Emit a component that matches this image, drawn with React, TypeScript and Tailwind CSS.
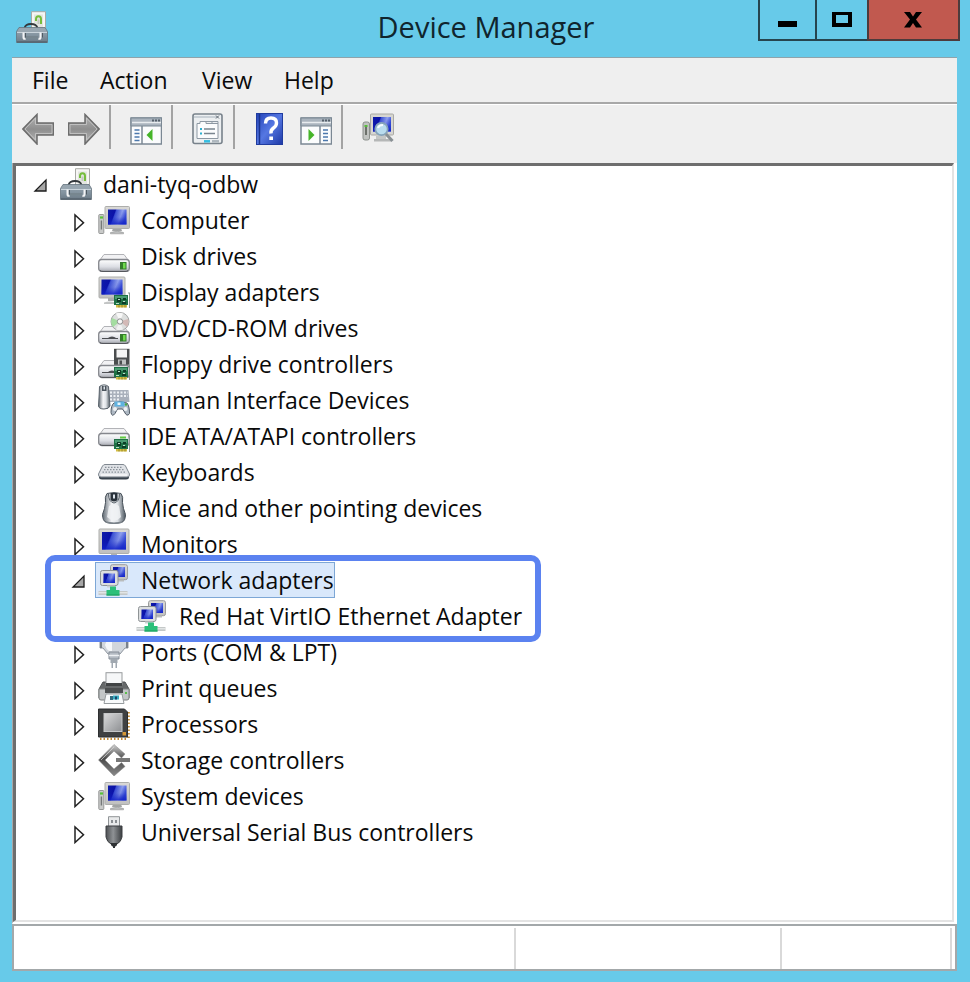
import { useState, type ReactNode } from "react";

function Svg({ children, size = "h-8 w-8" }: { children: ReactNode; size?: string }) {
  return (
    <svg viewBox="0 0 32 32" className={`${size} block shrink-0`} aria-hidden="true">
      {children}
    </svg>
  );
}

function SharedGradients() {
  return (
    <svg className="absolute h-0 w-0" aria-hidden="true">
      <defs>
        <linearGradient id="screen" x1="0" y1="0" x2="1" y2="0.3">
          <stop offset="0" stopColor="#0f1ca8" />
          <stop offset="0.38" stopColor="#0a10a6" />
          <stop offset="0.44" stopColor="#3f55d4" />
          <stop offset="0.75" stopColor="#93a4ee" />
          <stop offset="1" stopColor="#3a50d8" />
        </linearGradient>
        <linearGradient id="shade" x1="0" y1="0" x2="0" y2="1">
          <stop offset="0" stopColor="#1020c0" stopOpacity="0" />
          <stop offset="0.5" stopColor="#1020c0" stopOpacity="0.2" />
          <stop offset="1" stopColor="#1020c8" stopOpacity="0.9" />
        </linearGradient>
        <linearGradient id="frame" x1="0" y1="0" x2="0" y2="1">
          <stop offset="0" stopColor="#dad9d6" />
          <stop offset="1" stopColor="#c0c0bf" />
        </linearGradient>
        <linearGradient id="drive" x1="0" y1="0" x2="0" y2="1">
          <stop offset="0" stopColor="#ffffff" />
          <stop offset="0.6" stopColor="#dcdee4" />
          <stop offset="1" stopColor="#a9abb2" />
        </linearGradient>
        <linearGradient id="case" x1="0" y1="0" x2="0" y2="1">
          <stop offset="0" stopColor="#94a3ae" />
          <stop offset="0.5" stopColor="#8595a1" />
          <stop offset="1" stopColor="#6b7a86" />
        </linearGradient>
        <linearGradient id="arrow" x1="0" y1="0" x2="0" y2="1">
          <stop offset="0" stopColor="#b5b5b5" />
          <stop offset="0.5" stopColor="#8e8e8e" />
          <stop offset="1" stopColor="#b8b8b8" />
        </linearGradient>
        <linearGradient id="mouse" x1="0" y1="0" x2="1" y2="0">
          <stop offset="0" stopColor="#5f6972" />
          <stop offset="0.4" stopColor="#f4f5f7" />
          <stop offset="0.65" stopColor="#dfe3e7" />
          <stop offset="1" stopColor="#4c565f" />
        </linearGradient>
        <linearGradient id="chip" x1="0" y1="0" x2="1" y2="1">
          <stop offset="0" stopColor="#d9dadb" />
          <stop offset="1" stopColor="#8d8f92" />
        </linearGradient>
        <linearGradient id="book" x1="0" y1="0" x2="1" y2="1">
          <stop offset="0" stopColor="#2544b8" />
          <stop offset="0.5" stopColor="#5577e2" />
          <stop offset="1" stopColor="#1d38a6" />
        </linearGradient>
        <linearGradient id="metal" x1="0" y1="0" x2="0" y2="1">
          <stop offset="0" stopColor="#d0d0d0" />
          <stop offset="0.45" stopColor="#4a4a4a" />
          <stop offset="1" stopColor="#8a8a8a" />
        </linearGradient>
        <linearGradient id="plug" x1="0" y1="0" x2="1" y2="0">
          <stop offset="0" stopColor="#4d5053" />
          <stop offset="0.45" stopColor="#8f9295" />
          <stop offset="1" stopColor="#3c3f42" />
        </linearGradient>
      </defs>
    </svg>
  );
}

function Screen({ x, y, width, height }: { x: number; y: number; width: number; height: number }) {
  return (
    <>
      <rect x={x} y={y} width={width} height={height} fill="url(#screen)" />
      <rect x={x} y={y} width={width} height={height} fill="url(#shade)" />
    </>
  );
}

function AdapterCard() {
  return (
    <g>
      <path d="M16 19h14v10H16z" fill="#1e7145" />
      <path d="M17 20h12v3H17z" fill="#4b9b72" />
      <path d="M19 22h4v4h-4zM25 22h3v2h-3zM24 26h4v2h-4z" fill="#0d3d26" />
      <path d="M20 23h2v1h-2zM25 25h2v1h-2zM18 27h3v1h-3z" fill="#b9dfc8" />
      <path d="M18 29h11v2.5H18z" fill="#d3bd45" />
      <path d="M21 29v2.5M24 29v2.5M27 29v2.5" stroke="#8c7b20" strokeWidth="0.8" />
      <path d="M30 17h1.6v15" fill="none" stroke="#8d9a93" strokeWidth="1.2" />
    </g>
  );
}

function DriveBody({ y = 0, slot = false, led = true }: { y?: number; slot?: boolean; led?: boolean }) {
  return (
    <g transform={`translate(0 ${y})`}>
      <path d="M6 14.5h20l4.5 6h-29z" fill="#f2f2f4" stroke="#b2b3b7" />
      <rect x="0.7" y="19.5" width="30.6" height="12" rx="3" fill="url(#drive)" stroke="#85878d" strokeWidth="1.3" />
      <path d="M2 30.5q1 1 3 1h22q2 0 3-1" fill="none" stroke="#55575c" strokeWidth="1" />
      {slot && <path d="M4 26h6q1.5-1.5 4-1.5t4 1.5h2v1H4z" fill="#4c4e52" />}
      {led && (
        <>
          <rect x="22" y="22" width="6.5" height="7.5" fill="#357d2c" />
          <rect x="25" y="23" width="2.5" height="5.5" fill="#6fdb4d" />
        </>
      )}
    </g>
  );
}

function Toolbox() {
  return (
    <Svg>
      <path d="M15.500 0.700h14V20h-14z" fill="#f6f6f4" stroke="#a9aaa6" />
      <path d="M18 3.500h9V18h-9z" fill="#e3e5e0" />
      <path d="M20 10V8q0-2.800 2.500-2.800T25 8v5" fill="none" stroke="#76bd3d" strokeWidth="2" />
      <path d="M21.500 8.500h2V13h-2z" fill="#c3c7bf" />
      <path d="M8.500 17q1-4 6.500-4t6.500 4" fill="none" stroke="#33383c" strokeWidth="1.800" />
      <path d="M3 16.500h26l2.500 4v11H.5v-11z" fill="url(#case)" stroke="#66737d" strokeWidth="0.800" />
      <path d="M3.300 17h25.400l2.200 4H1.100z" fill="#98a6b0" />
      <path d="M1 21.500h30" stroke="#c9d3da" />
      <path d="M10 25h12v2.500H10z" fill="#77868f" />
      <path d="M1 31h30" stroke="#4a5761" />
      <path d="M7.500 21.500v5q0 2 2 1M24.500 21.500v5q0 2-2 1" fill="none" stroke="#f3f4f5" strokeWidth="2" />
      <path d="M9.500 22v4.500M26.500 22v4.500" stroke="#4f5a62" />
    </Svg>
  );
}

function ComputerIcon() {
  return (
    <Svg>
      <rect x="0.8" y="10.5" width="5" height="19" rx="0.8" fill="#c9cac9" stroke="#969897" />
      <path d="M2 13.500h3" stroke="#58c23a" strokeWidth="2.200" />
      <path d="M3.400 16.500v9" stroke="#757878" strokeWidth="1.400" />
      <path d="M15 24h8l1 3h-10z" fill="#a3a5a5" />
      <path d="M12.500 28.500q7-2.500 13 0v1.300h-13z" fill="#bcbebe" stroke="#929494" strokeWidth="0.6" />
      <rect x="7" y="2.500" width="24.500" height="22" rx="1" fill="url(#frame)" stroke="#adaeac" />
      <Screen x={10} y={5.5} width={18.5} height={15} />
    </Svg>
  );
}

function DiskIcon() {
  return (
    <Svg>
      <DriveBody />
    </Svg>
  );
}

function DisplayIcon() {
  return (
    <Svg>
      <path d="M10 21h8v4h-8z" fill="#aaacac" />
      <path d="M6 26.500q6-2 11 0V28H6z" fill="#c3c5c5" />
      <rect x="1" y="1" width="26" height="21" rx="1" fill="url(#frame)" stroke="#adaeac" />
      <Screen x={3.5} y={3.5} width={21} height={15} />
      <AdapterCard />
    </Svg>
  );
}

function DvdIcon() {
  return (
    <Svg>
      <DriveBody slot />
      <circle cx="22" cy="9.5" r="9" fill="#dcdedd" stroke="#a0a2a2" />
      <path d="M22 9.500 14 6a9 9 0 0 0 1 9z" fill="#a4dda0" />
      <path d="M22 9.500 30 7a9 9 0 0 1-1 8z" fill="#d3b9b6" />
      <path d="M22 9.500 18 1.500a9 9 0 0 1 7 0z" fill="#f8f8f8" />
      <path d="M22 9.500 18 17.500a9 9 0 0 0 7 0z" fill="#f1f1f1" />
      <circle cx="22" cy="9.5" r="2.7" fill="#f7f7f7" stroke="#8d8f8f" />
    </Svg>
  );
}

function FloppyIcon() {
  return (
    <Svg>
      <DriveBody y={-2} slot led={false} />
      <rect x="16" y="0.8" width="15.5" height="16" fill="#4a4d4e" />
      <rect x="18.5" y="1.5" width="10.5" height="8" fill="#f4f4f4" />
      <rect x="20" y="11.5" width="8" height="5" fill="#bfc2c2" />
      <rect x="21.5" y="12.5" width="2.5" height="4" fill="#4a4d4e" />
      <AdapterCard />
    </Svg>
  );
}

function HumanInterfaceIcon() {
  return (
    <Svg>
      <path d="M10 6h20.500l1 12H10z" fill="#a9b0bb" />
      <path d="M12 8.500h18M12 12h18M12 15.500h10" stroke="#edf0f4" strokeWidth="2" strokeDasharray="2 1.500" />
      <path
        d="M1.500 2.500Q6-.8 10.500 2.500L11 10l1 12q-1 3-6 3t-5.500-3L1.200 10z"
        fill="url(#mouse)"
        stroke="#5a636c"
      />
      <path d="M4 2h4.500v5H4z" fill="#4a535c" />
      <path d="M5.500 2.500h1.500v3H5.500z" fill="#dce2e8" />
      <path
        d="M16 19q6-2.500 13 0 2.500 3 2.500 10.500-2.500 4-5-1.500l-2-3h-5L17 29.500q-3 4-4-1Q13 21 16 19z"
        fill="#aeb8c3"
        stroke="#505a65"
      />
      <path d="M16.500 17.500h10v5h-10z" fill="#5fb2e0" />
      <path d="M19.500 18.500h3v2.500h-3z" fill="#e4f6ff" />
      <circle cx="17" cy="25" r="2" fill="#eef1f4" />
      <circle cx="27.5" cy="25" r="2" fill="#eef1f4" />
      <circle cx="28" cy="20.5" r="1.2" fill="#46aa45" />
    </Svg>
  );
}

function IdeIcon() {
  return (
    <Svg>
      <DriveBody y={-6} led={false} />
      <path d="M22 17.500h6" stroke="#63ca42" strokeWidth="2" />
      <AdapterCard />
    </Svg>
  );
}

function KeyboardIcon() {
  return (
    <Svg>
      <path d="M1 18v3q0 2.500 3 2.500h24q3 0 3-2.500v-3z" fill="#38424c" />
      <path
        d="M7 8.500h18q1.500 0 2.500 1.500l4 8q.5 3-2.500 3H3q-3 0-2.500-3l4-8Q5.500 8.500 7 8.500z"
        fill="#dfe2e6"
        stroke="#808890"
      />
      <path d="M7 11.300h18" stroke="#8b929a" strokeWidth="1.3" strokeDasharray="1.500 1.500" />
      <path d="M6 13.700h21" stroke="#8b929a" strokeWidth="1.3" strokeDasharray="1.500 1.500" />
      <path d="M4.500 16.200h24" stroke="#8b929a" strokeWidth="1.3" strokeDasharray="1.500 1.500" />
      <path d="M3 19h26" stroke="#fff" strokeWidth="1.2" />
    </Svg>
  );
}

function MouseIcon() {
  return (
    <Svg>
      <path
        d="M9 1.500Q16-.5 23 1.500q2.500 3 1.500 9 .5 6 3 12 0 6.500-4 8-7.500 2-15 0-4-1.500-4-8 2.500-6 3-12-1-6 1.500-9z"
        fill="url(#mouse)"
        stroke="#48515a"
      />
      <path d="M12.500 1h7v7q-3.500 3-7 0z" fill="#28313a" />
      <path d="M15 2.500h2v4h-2z" fill="#dfe6ed" />
      <path d="M10.500 2q0 8 5.500 9 5.500-1 5.500-9" fill="none" stroke="#59626b" />
      <path d="M11 14q5-4 10 0l2 11q-6.500 7-14 0z" fill="#f0f2f4" opacity="0.85" />
      <path d="M8 30q8 2.500 16 0" stroke="#7b838a" strokeWidth="1.5" fill="none" />
    </Svg>
  );
}

function MonitorIcon() {
  return (
    <Svg>
      <rect x="1" y="1" width="30" height="24.5" rx="1" fill="url(#frame)" stroke="#adaeac" />
      <Screen x={4} y={4} width={24} height={17.5} />
      <path d="M13 26h6v3h-6zM9 29h14v2H9z" fill="#b1b3b3" />
    </Svg>
  );
}

function NetworkIcon() {
  return (
    <Svg>
      <rect x="12.5" y="0.7" width="17" height="15" rx="2" fill="url(#frame)" stroke="#9a9c9c" />
      <Screen x={15} y={3} width={12} height={10} />
      <path d="M20 15.500h6v2h-6z" fill="#b9bcbc" />
      <rect x="2.500" y="6.500" width="17.5" height="15" rx="2" fill="#dcdedf" stroke="#8f9496" />
      <Screen x={5.500} y={9.500} width={11.500} height={9.500} />
      <path d="M9 21.500h8v2H9z" fill="#cdd1d3" />
      <path d="M0.500 27h29v4H.5z" fill="#c4c8c8" />
      <path d="M0.500 28.800h29" stroke="#eff1f1" />
      <path d="M12 22.500h6V26h3.500v5.500h-13V26H12z" fill="#2cc07a" />
      <path d="M8.500 31h13" stroke="#1b9c5a" />
    </Svg>
  );
}

function PortIcon() {
  return (
    <Svg>
      <path d="M2 1h28v11h-3L22 18H10L5 12H2z" fill="#d1d6dc" stroke="#8f969f" />
      <path d="M3 1v11M29 1v11" stroke="#79818a" strokeWidth="2" />
      <path d="M9 4h5v11h-3q-3-2-4-6z" fill="#f6f8fa" />
      <path d="M11 16h10v7H11z" fill="#b4bbc3" stroke="#858d97" />
      <path d="M11 19.500h10" stroke="#edf0f3" strokeWidth="1.5" />
      <path d="M12.500 23h7v4h-7zM13.500 27H15v5h-1.500zM17.500 27H19v5h-1.500z" fill="#a0a8b0" />
    </Svg>
  );
}

function PrinterIcon() {
  return (
    <Svg>
      <path d="M5 10h22l4 7v9H1v-9z" fill="#66696a" stroke="#505354" />
      <rect x="8" y="0.7" width="16" height="12" fill="#f6f7f8" stroke="#989b9d" />
      <path d="M8 11h16v3H8z" fill="#414445" />
      <path d="M1 17h30v9q0 2-2 2H3q-2 0-2-2z" fill="#c3c6c7" stroke="#7d8081" />
      <path d="M7 16h18v5H7z" fill="#4c4f50" />
      <path d="M27 20h2v2h-2z" fill="#59c14b" />
      <path d="M8 22h16l2 9.500H6z" fill="#f8fafb" stroke="#979c9f" />
      <path d="M12 24h3v4h-3z" fill="#326b80" />
      <path d="M15 23.500h6v4h-6z" fill="#3aabc0" />
      <path d="M17 24.500h2v3h-2z" fill="#16466b" />
    </Svg>
  );
}

function ProcessorIcon() {
  return (
    <Svg>
      <path d="M2 31h28M30.500 4v26" stroke="#c48c35" strokeWidth="2.6" strokeDasharray="1.500 2" />
      <path d="M0.500 1h26l3 3v25H.5z" fill="#3f4142" stroke="#2d2f30" />
      <rect x="6" y="5.5" width="18" height="18" fill="url(#chip)" stroke="#c5c7c8" />
      <path d="M24.500 24H28v3.500h-3.500z" fill="#d69735" />
    </Svg>
  );
}

function StorageIcon() {
  return (
    <Svg>
      <path
        d="M16 0.500 27 10l-3.500 4L16 7l-9 9 9 9 7.500-6.500 3.500 4L16 32 .5 16z"
        fill="url(#metal)"
        stroke="#858585"
        strokeWidth="0.5"
      />
      <path d="M18 14h14v4H18z" fill="#777" />
      <path d="M3 16 16 3" stroke="#d8d8d8" strokeWidth="0.7" />
    </Svg>
  );
}

function UsbIcon() {
  return (
    <Svg>
      <path d="M10.500 0.700h11V11h-11z" fill="#e9eaeb" stroke="#909497" />
      <path d="M13 4h2v3h-2zM17 4h2v3h-2z" fill="#8b8f93" />
      <path d="M8 10h16v11q-1 5-5 7h-6q-4-2-5-7z" fill="url(#plug)" stroke="#3c3f42" />
      <path d="M13 27h6v2q-1 1.500-2 1.500V32h-2v-1.500q-1 0-2-1.500z" fill="#2f3234" />
    </Svg>
  );
}

function BackIcon() {
  return (
    <Svg>
      <path d="M15 1.500V10h16.500v12H15v9L.8 16z" fill="url(#arrow)" stroke="#6c6c6c" strokeWidth="1.5" />
      <path d="M13.500 5v6.500H30v9H13.500V27L3 16z" fill="none" stroke="#c9c9c9" strokeWidth="0.8" />
    </Svg>
  );
}

function ForwardIcon() {
  return (
    <Svg>
      <path d="M17 1.500V10H.5v12H17v9L31.200 16z" fill="url(#arrow)" stroke="#6c6c6c" strokeWidth="1.5" />
      <path d="M18.500 5v6.500H2v9h16.500V27L29 16z" fill="none" stroke="#c9c9c9" strokeWidth="0.8" />
    </Svg>
  );
}

function PaneFrame() {
  return (
    <>
      <rect x="1" y="5" width="30.5" height="26" fill="#fbfcfd" stroke="#7b8894" strokeWidth="1.5" />
      <path d="M1 5h30.500v8H1z" fill="#aab4be" stroke="#7b8894" />
      <path d="M2 9.500h29" stroke="#e8ecef" strokeWidth="1.5" />
      <path d="M22 6.500h2v2h-2zM25 6.500h2v2h-2zM28 6.500h2v2h-2z" fill="#55606b" />
    </>
  );
}

function ConsoleTreeIcon() {
  return (
    <Svg>
      <PaneFrame />
      <path d="M12 13v18" stroke="#7b8894" strokeWidth="1.5" />
      <path d="M4.500 17h5M4.500 20.500h5M4.500 24h5M4.500 27.500h5" stroke="#4c78ad" strokeWidth="1.5" />
      <path d="M22.500 16v12L16.500 22z" fill="#45b429" />
    </Svg>
  );
}

function ActionPaneIcon() {
  return (
    <Svg>
      <PaneFrame />
      <path d="M20 13v18" stroke="#7b8894" strokeWidth="1.5" />
      <path d="M23 17h5M23 20.500h5M23 24h5M23 27.500h5" stroke="#4c78ad" strokeWidth="1.5" />
      <path d="M8.500 16v12l6-6z" fill="#45b429" />
    </Svg>
  );
}

function PropertiesIcon() {
  return (
    <Svg>
      <rect x="1" y="1" width="29" height="29.5" rx="2" fill="#eceff1" stroke="#78828b" strokeWidth="1.6" />
      <path d="M2 4h23" stroke="#c9d0d6" strokeWidth="2" />
      <path d="m24 2.500 3 3m0-3-3 3" stroke="#5b656f" />
      <path d="M5 10.500h3v-2h6v2h12v15H5z" fill="#fbfcfd" stroke="#8d98a3" />
      <path d="M14 8.500h6v2M20 8.500h6v2" fill="none" stroke="#8d98a3" />
      <path d="M12 16h11M12 20.500h11" stroke="#7a8590" strokeWidth="1.4" />
      <path d="M8 16h2M8 20.500h2" stroke="#2eafd0" strokeWidth="2" />
      <path d="M12 28.300h6" stroke="#35bee2" strokeWidth="2.5" />
      <path d="M20 28.300h7" stroke="#adb6bd" strokeWidth="2.5" />
    </Svg>
  );
}

function HelpIcon() {
  return (
    <Svg>
      <rect x="2.500" y="0.500" width="26" height="31" fill="url(#book)" stroke="#203c9f" />
      <path d="M5.500 1v30" stroke="#1b348f" strokeWidth="1.5" />
      <path
        d="M11.500 10.500q0-5.500 5.500-5.500t5.500 5q0 3-3 5T17 20.500"
        fill="none"
        stroke="#fff"
        strokeWidth="3.4"
      />
      <path d="M15.300 23.500H19V27h-3.700z" fill="#fff" />
    </Svg>
  );
}

function ScanIcon() {
  return (
    <Svg>
      <rect x="1" y="9" width="6.5" height="18" rx="2" fill="#c0c3c0" stroke="#8b908c" />
      <path d="M4 12v10" stroke="#50564f" strokeWidth="1.5" />
      <path d="M2.500 13h3" stroke="#57be3b" strokeWidth="2" />
      <path d="M14 23h10v4H14z" fill="#c4c6c5" />
      <path d="M12 26h17v2.500H12z" fill="#b5b7b7" />
      <rect x="8.5" y="1" width="23" height="21" rx="1" fill="#d7d6d1" stroke="#a9a9a4" />
      <Screen x={11} y={4} width={18} height={14.5} />
      <circle cx="19.5" cy="16" r="6.2" fill="#b9dcee" stroke="#85a3b9" strokeWidth="1.8" />
      <path d="M16 15q1-3 5-3" stroke="#f6fcff" strokeWidth="2" fill="none" />
      <path d="m24 21 6.500 7" stroke="#888f93" strokeWidth="3" />
    </Svg>
  );
}

type Device = { label: string; icon: () => ReactNode; children?: Device[]; marked?: boolean };

const devices: Device[] = [
  { label: "Computer", icon: ComputerIcon },
  { label: "Disk drives", icon: DiskIcon },
  { label: "Display adapters", icon: DisplayIcon },
  { label: "DVD/CD-ROM drives", icon: DvdIcon },
  { label: "Floppy drive controllers", icon: FloppyIcon },
  { label: "Human Interface Devices", icon: HumanInterfaceIcon },
  { label: "IDE ATA/ATAPI controllers", icon: IdeIcon },
  { label: "Keyboards", icon: KeyboardIcon },
  { label: "Mice and other pointing devices", icon: MouseIcon },
  { label: "Monitors", icon: MonitorIcon },
  {
    label: "Network adapters",
    icon: NetworkIcon,
    marked: true,
    children: [{ label: "Red Hat VirtIO Ethernet Adapter", icon: NetworkIcon }],
  },
  { label: "Ports (COM & LPT)", icon: PortIcon },
  { label: "Print queues", icon: PrinterIcon },
  { label: "Processors", icon: ProcessorIcon },
  { label: "Storage controllers", icon: StorageIcon },
  { label: "System devices", icon: ComputerIcon },
  { label: "Universal Serial Bus controllers", icon: UsbIcon },
];

function Expander({ open }: { open: boolean }) {
  return (
    <svg viewBox="0 0 16 24" className="h-6 w-4" aria-hidden="true">
      {open ? (
        <path d="M13 8v11H2z" fill="#a6a6a6" stroke="#1c1c1c" strokeWidth="1.3" />
      ) : (
        <path d="M4 7v15.500l8.500-7.800z" fill="#fff" stroke="#222" strokeWidth="1.5" />
      )}
    </svg>
  );
}

function Row({
  device,
  open,
  onToggle,
  selected,
  onSelect,
}: {
  device: Device;
  open?: boolean;
  onToggle?: () => void;
  selected: boolean;
  onSelect: () => void;
}) {
  const Icon = device.icon;
  return (
    <div className="flex h-9 items-center">
      {onToggle ? (
        <button
          type="button"
          onClick={onToggle}
          aria-label={`${open ? "Collapse" : "Expand"} ${device.label}`}
          className="flex h-9 w-8 shrink-0 items-center justify-center"
        >
          <Expander open={!!open} />
        </button>
      ) : (
        <span className="w-8 shrink-0" />
      )}
      <button
        type="button"
        onClick={onSelect}
        className={`flex h-9 items-center gap-[11px] border pl-0.5 whitespace-nowrap ${
          selected ? "border-[#7da7d6] bg-[#d9e8fb]" : "border-transparent"
        }`}
      >
        <Icon />
        <span className="leading-8">{device.label}</span>
      </button>
    </div>
  );
}

function DeviceTree() {
  const [rootOpen, setRootOpen] = useState(true);
  const [open, setOpen] = useState<string[]>(["Network adapters"]);
  const [selected, setSelected] = useState("Network adapters");
  const root: Device = { label: "dani-tyq-odbw", icon: Toolbox };
  const toggle = (label: string) =>
    setOpen((now) => (now.includes(label) ? now.filter((item) => item !== label) : [...now, label]));

  return (
    <div className="min-w-0 flex-1 border-t-3 border-r-2 border-b-2 border-l-3 border-t-[#6e6e6e] border-r-[#e3e3e3] border-b-[#e3e3e3] border-l-[#6e6e6e] bg-white pl-[9px] text-[23px] text-[#0a0a0a]">
      <Row
        device={root}
        open={rootOpen}
        onToggle={() => setRootOpen(!rootOpen)}
        selected={selected === root.label}
        onSelect={() => setSelected(root.label)}
      />
      {rootOpen && (
        <ul className="pl-[38px]">
          {devices.map((device) => {
            const isOpen = open.includes(device.label);
            return (
              <li key={device.label} className="relative">
                <Row
                  device={device}
                  open={isOpen}
                  onToggle={() => toggle(device.label)}
                  selected={selected === device.label}
                  onSelect={() => setSelected(device.label)}
                />
                {isOpen && device.children && (
                  <ul className="pl-[38px]">
                    {device.children.map((child) => (
                      <li key={child.label}>
                        <Row
                          device={child}
                          selected={selected === child.label}
                          onSelect={() => setSelected(child.label)}
                        />
                      </li>
                    ))}
                  </ul>
                )}
                {device.marked && (
                  <div className="pointer-events-none absolute -top-[7px] -bottom-2 -left-[18px] z-10 w-[496px] rounded-[10px] border-6 border-[#5b82f0]" />
                )}
              </li>
            );
          })}
        </ul>
      )}
    </div>
  );
}

function ToolButton({ label, children }: { label: string; children: ReactNode }) {
  return (
    <button type="button" aria-label={label} className="h-8 w-8 shrink-0">
      {children}
    </button>
  );
}

function Divider() {
  return <span className="-mt-2 mr-[5px] -ml-[5px] h-11 w-0.5 shrink-0 bg-[#a3a3a3]" />;
}

export default function App() {
  return (
    <div className="flex min-h-screen flex-col bg-[#67cae9] pr-[13px] pb-[11px] pl-3 font-['Open_Sans','Noto_Sans',sans-serif] text-[#0a0a0a]">
      <SharedGradients />
      <header className="-mr-[3px] grid h-[57px] grid-cols-[1fr_auto_1fr] items-start">
        <div className="pt-[11px] pl-1">
          <Toolbox />
        </div>
        <h1 className="pt-[7px] text-[29px] leading-10 text-[#10252d]">Device Manager</h1>
        <div className="flex h-[41px] justify-end text-black">
          <button
            type="button"
            aria-label="Minimize"
            className="flex w-[57px] items-center justify-center border-b-2 border-l-2 border-[#26454f]"
          >
            <svg viewBox="0 0 20 16" className="h-4 w-5" aria-hidden="true">
              <path d="M0 9h19v6H0z" />
            </svg>
          </button>
          <button
            type="button"
            aria-label="Maximize"
            className="flex w-[52px] items-center justify-center border-b-2 border-l-2 border-[#26454f]"
          >
            <svg viewBox="0 0 20 16" className="h-4 w-5" aria-hidden="true">
              <path d="M2 1h16v12H2z" fill="none" stroke="#000" strokeWidth="4" />
            </svg>
          </button>
          <button
            type="button"
            aria-label="Close"
            className="flex w-[93px] items-center justify-center border-r-2 border-b-2 border-l-2 border-[#4d3b3c] bg-[#c1594f]"
          >
            <svg viewBox="0 0 20 16" className="h-4 w-5" aria-hidden="true">
              <path d="M0 0h6l3 4.500L12 0h6l-6 7.500 6 8h-6L9 11l-3 4.500H0l6-8z" />
            </svg>
          </button>
        </div>
      </header>

      <main className="flex flex-1 flex-col border-t border-t-[#8fa3ab] bg-[#efefef]">
        <nav className="flex h-[46px] items-center border-b-2 border-[#a8a8a8] pl-5 text-[23px]">
          <button type="button" className="w-[68px] text-left">File</button>
          <button type="button" className="w-[102px] text-left">Action</button>
          <button type="button" className="w-[82px] text-left">View</button>
          <button type="button" className="text-left">Help</button>
        </nav>
        <div className="flex h-[59px] items-start gap-3.5 border-t border-white pt-2 pl-2.5">
          <ToolButton label="Back"><BackIcon /></ToolButton>
          <ToolButton label="Forward"><ForwardIcon /></ToolButton>
          <Divider />
          <ToolButton label="Show or hide console tree"><ConsoleTreeIcon /></ToolButton>
          <Divider />
          <ToolButton label="Properties"><PropertiesIcon /></ToolButton>
          <Divider />
          <ToolButton label="Help"><HelpIcon /></ToolButton>
          <ToolButton label="Show or hide action pane"><ActionPaneIcon /></ToolButton>
          <Divider />
          <ToolButton label="Scan for hardware changes"><ScanIcon /></ToolButton>
        </div>
        <div className="flex flex-1 border-r-3 border-b-2 border-l border-r-white border-b-white border-l-[#a8a8a8]">
          <DeviceTree />
        </div>
        <footer className="flex h-[47px] border-2 border-[#a3a8aa] bg-white pt-0.5 pr-[3px]">
          <div className="flex-1 border-r-2 border-[#d9d9d9]" />
          <div className="w-[266px] border-r-2 border-[#d9d9d9]" />
          <div className="w-[170px] border-r-2 border-[#d9d9d9]" />
        </footer>
      </main>
    </div>
  );
}
